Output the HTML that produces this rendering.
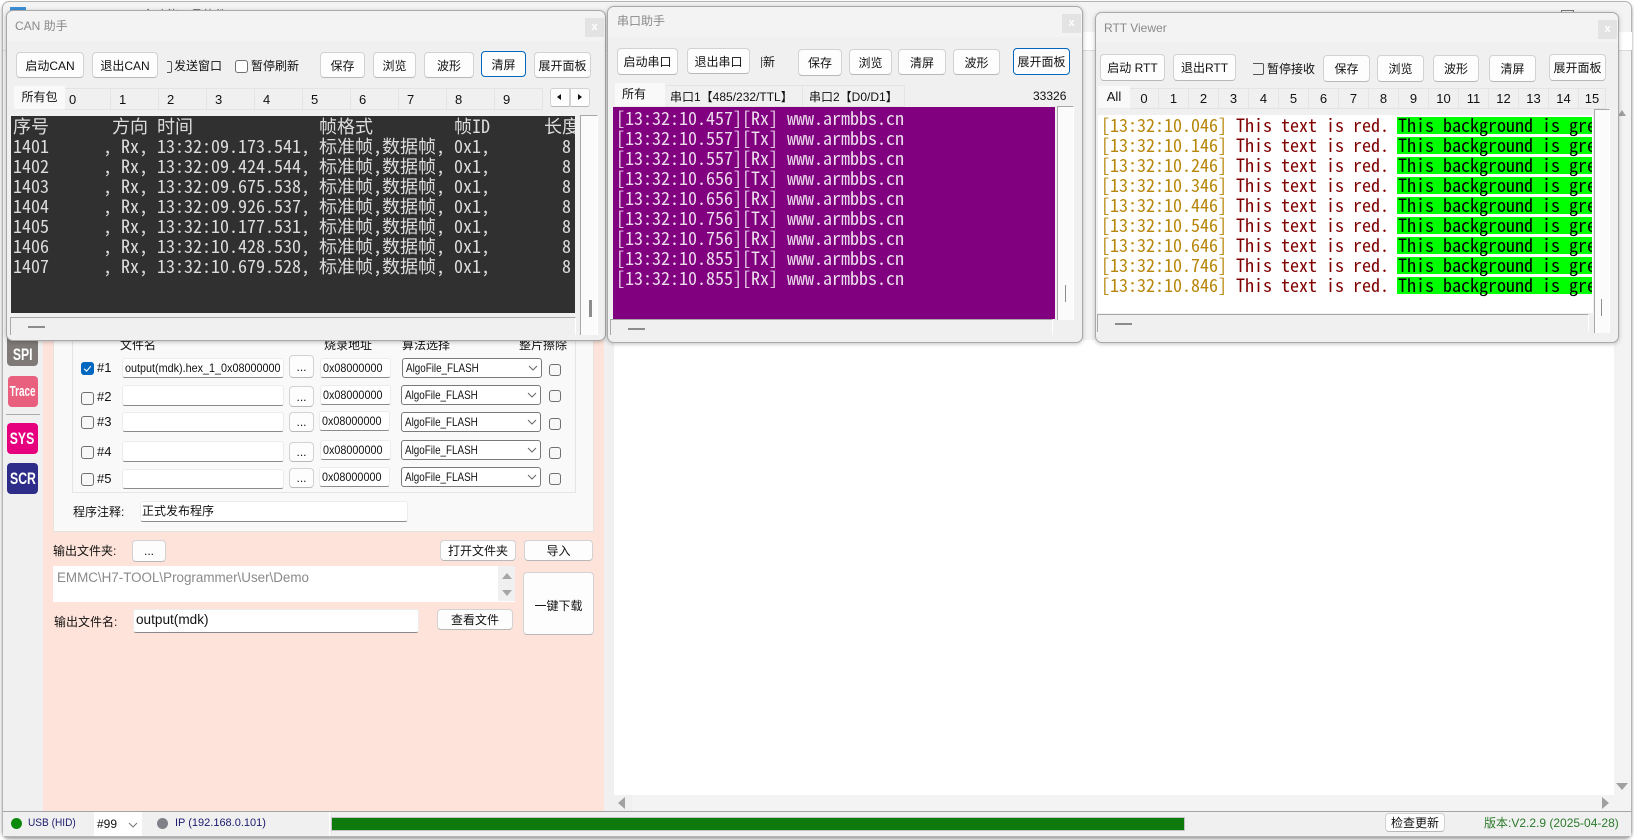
<!DOCTYPE html>
<html lang="zh"><head><meta charset="utf-8"><title>H7-TOOL</title>
<style>
html,body{margin:0;padding:0;width:1634px;height:840px;overflow:hidden;background:#fff}
*{box-sizing:border-box}
body{font:12px "Liberation Sans","Noto Sans CJK SC",sans-serif;color:#111;position:relative}
div,span.a,svg.a{position:absolute}
.b{background:#fdfdfd;border:1px solid #d2d2d2;border-bottom-color:#b8b8b8;border-radius:4px;display:flex;align-items:center;justify-content:center;white-space:nowrap;font-size:12px}
.f{border:1.5px solid #0067c0;border-radius:4px}
.win{background:#f0f0f0;border:1px solid #a9a9a9;border-radius:7px;box-shadow:0 1px 4px rgba(0,0,0,.25);overflow:hidden}
.tb{background:#f3f3f3}
.ttl{color:#8a8a8a;font-size:12px;white-space:nowrap}
.cl{background:#e3e3e3;color:#fff;font-size:11px;font-weight:bold;text-align:center;line-height:18px}
.t{white-space:nowrap}
.tab{background:#f0f0f0;border:1px solid #e4e4e4;border-left:none;white-space:nowrap;line-height:22px;text-align:center;font-size:13px}
.sel{background:#f9f9f9;border:none;border-bottom:1px solid #ececec;font-size:12px}
.tz{font-size:12px}
.mono{font-family:"Noto Sans Mono CJK SC","Liberation Mono","Noto Sans CJK SC",monospace;font-size:18px;line-height:20px;white-space:pre;overflow:hidden}
.sc{background:#fbfbfb;border:1px solid #a8a8a8;border-right-color:#fff;border-bottom:none}
.hs{background:#f0f0f0;border-top:1px solid #a8a8a8;border-left:1px solid #a8a8a8;border-right:1px solid #fff}
.mk{background:#8c8c8c}
.in{background:#fff;border:1px solid #ececec;border-bottom:1px solid #8a8a8a;border-radius:3px;padding-left:2px;line-height:18px;white-space:nowrap;overflow:hidden}
.sl{background:#fff;border:1px solid #7a7a7a;border-radius:3px;padding-left:3px;line-height:18px;white-space:nowrap}
.cb{background:#f7f7f7;border:1px solid #707070;border-radius:3px}
.side{border-radius:4px;color:#fff;font-weight:bold;font-size:17px;display:flex;align-items:center;justify-content:center;overflow:hidden}
.side span{display:inline-block;transform:scaleX(.72)}
.tri{width:0;height:0}
.q1,.q2,.q3{display:inline-block;transform-origin:0 50%}
.q1{transform:scaleX(.9)}
.q2{transform:scaleX(.9)}
.q3{transform:scaleX(.82)}
</style></head><body>

<!-- main window -->
<div style="left:2px;top:1px;width:1630px;height:836px;background:#f3f3f3;border:1px solid #b5b5b5;border-radius:7px;box-shadow:0 2px 3px rgba(0,0,0,.4)"></div>
<div style="left:10px;top:7px;width:16px;height:4px;background:#3d8fd8"></div>
<div class="t" style="left:88px;top:2px;color:#555;font-size:12px;height:10px;overflow:hidden;line-height:26px">H7-TOOL 多功能工具软件</div>
<div style="left:1561px;top:10px;width:13px;height:3px;border:1px solid #777;border-bottom:none"></div>
<div style="left:614px;top:32px;width:1018px;height:18px;background:#fff"></div>
<div style="left:3px;top:50px;width:1628px;height:1px;background:#dcdcdc"></div>
<!-- left -->
<div style="left:3px;top:340px;width:40px;height:471px;background:#f0f0f0"></div>
<div style="left:43px;top:340px;width:561px;height:471px;background:#fee3da"></div>
<div style="left:604px;top:340px;width:28px;height:471px;background:#f0f0f0"></div>
<div style="left:614px;top:340px;width:1000px;height:455px;background:#fff"></div>
<div class="tri" style="left:1618px;top:110px;border:4.5px solid transparent;border-top:none;border-bottom:6px solid #a0a0a0;border-left-width:4px;border-right-width:4px"></div>
<div class="tri" style="left:1616px;top:783px;border:6px solid transparent;border-bottom:none;border-top:7px solid #a0a0a0"></div>
<div class="tri" style="left:1602px;top:797px;border:6px solid transparent;border-right:none;border-left:7px solid #a0a0a0"></div>
<div class="tri" style="left:618px;top:797px;border:6px solid transparent;border-left:none;border-right:7px solid #a0a0a0"></div>

<div class="side" style="left:7px;top:330px;width:31px;height:36px;background:#7f7a78;padding-top:13px"><span>SPI</span></div>
<div class="side" style="left:8px;top:376px;width:30px;height:31px;background:#e8607e;font-size:15px"><span style="transform:scaleX(.66)">Trace</span></div>
<div style="left:6px;top:414px;width:34px;height:1px;background:#aaa"></div>
<div class="side" style="left:7px;top:423px;width:31px;height:31px;background:#e6007e"><span>SYS</span></div>
<div class="side" style="left:7px;top:463px;width:31px;height:31px;background:#2e2e8a"><span>SCR</span></div>

<div style="left:53px;top:340px;width:541px;height:192px;background:#f9f9f9;border:1px solid #e8e2df"></div>
<div style="left:72px;top:340px;width:504px;height:153px;background:#f9f9f9;border:1px solid #e5e5e5"></div>
<div class="t" style="left:120px;top:338px;line-height:14px">文件名</div>
<div class="t" style="left:324px;top:338px;line-height:14px">烧录地址</div>
<div class="t" style="left:402px;top:338px;line-height:14px">算法选择</div>
<div class="t" style="left:519px;top:338px;line-height:14px">整片擦除</div>

<!-- row 1 -->
<div style="left:81px;top:362px;width:13px;height:13px;background:#0067c0;border-radius:3px"></div>
<svg class="a" style="left:81px;top:362px" width="13" height="13"><path d="M3.2 6.8 5.6 9.2 9.8 4.2" stroke="#fff" fill="none" stroke-width="1.1"/></svg>
<div class="t" style="left:97px;top:361px;line-height:14px;font-size:13px">#1</div>
<div class="in" style="left:122px;top:358px;width:162px;height:20px"><span class="q1">output(mdk).hex_1_0x08000000</span></div>
<div class="b" style="left:289px;top:355px;width:25px;height:23px">...</div>
<div class="in" style="left:320px;top:358px;width:71px;height:20px"><span class="q2">0x08000000</span></div>
<div class="sl" style="left:402px;top:358px;width:140px;height:20px"><span class="q3">AlgoFile_FLASH</span></div>
<svg class="a" style="left:528px;top:365px" width="10" height="6"><path d="M1 1 5 5 9 1" stroke="#666" fill="none"/></svg>
<div class="cb" style="left:549px;top:364px;width:12px;height:12px"></div>
<!-- row 2 -->
<div class="cb" style="left:81px;top:392px;width:13px;height:13px"></div>
<div class="t" style="left:97px;top:390px;line-height:14px;font-size:13px">#2</div>
<div class="in" style="left:122px;top:385px;width:162px;height:21px"></div>
<div class="b" style="left:289px;top:386px;width:25px;height:21px">...</div>
<div class="in" style="left:320px;top:385px;width:71px;height:20px"><span class="q2">0x08000000</span></div>
<div class="sl" style="left:401px;top:385px;width:140px;height:20px"><span class="q3">AlgoFile_FLASH</span></div>
<svg class="a" style="left:527px;top:392px" width="10" height="6"><path d="M1 1 5 5 9 1" stroke="#666" fill="none"/></svg>
<div class="cb" style="left:549px;top:390px;width:12px;height:12px"></div>
<!-- row 3 -->
<div class="cb" style="left:81px;top:416px;width:13px;height:13px"></div>
<div class="t" style="left:97px;top:415px;line-height:14px;font-size:13px">#3</div>
<div class="in" style="left:122px;top:412px;width:162px;height:20px"></div>
<div class="b" style="left:289px;top:412px;width:25px;height:20px">...</div>
<div class="in" style="left:319px;top:411px;width:71px;height:20px"><span class="q2">0x08000000</span></div>
<div class="sl" style="left:401px;top:412px;width:140px;height:20px"><span class="q3">AlgoFile_FLASH</span></div>
<svg class="a" style="left:527px;top:419px" width="10" height="6"><path d="M1 1 5 5 9 1" stroke="#666" fill="none"/></svg>
<div class="cb" style="left:549px;top:418px;width:12px;height:12px"></div>
<!-- row 4 -->
<div class="cb" style="left:81px;top:446px;width:13px;height:13px"></div>
<div class="t" style="left:97px;top:445px;line-height:14px;font-size:13px">#4</div>
<div class="in" style="left:122px;top:441px;width:162px;height:21px"></div>
<div class="b" style="left:289px;top:442px;width:25px;height:20px">...</div>
<div class="in" style="left:320px;top:440px;width:71px;height:20px"><span class="q2">0x08000000</span></div>
<div class="sl" style="left:401px;top:440px;width:140px;height:20px"><span class="q3">AlgoFile_FLASH</span></div>
<svg class="a" style="left:527px;top:447px" width="10" height="6"><path d="M1 1 5 5 9 1" stroke="#666" fill="none"/></svg>
<div class="cb" style="left:549px;top:447px;width:12px;height:12px"></div>
<!-- row 5 -->
<div class="cb" style="left:81px;top:473px;width:13px;height:13px"></div>
<div class="t" style="left:97px;top:472px;line-height:14px;font-size:13px">#5</div>
<div class="in" style="left:122px;top:469px;width:162px;height:20px"></div>
<div class="b" style="left:289px;top:468px;width:25px;height:20px">...</div>
<div class="in" style="left:319px;top:467px;width:71px;height:20px"><span class="q2">0x08000000</span></div>
<div class="sl" style="left:401px;top:467px;width:140px;height:20px"><span class="q3">AlgoFile_FLASH</span></div>
<svg class="a" style="left:527px;top:474px" width="10" height="6"><path d="M1 1 5 5 9 1" stroke="#666" fill="none"/></svg>
<div class="cb" style="left:549px;top:473px;width:12px;height:12px"></div>

<div class="t" style="left:73px;top:505px;line-height:14px">程序注释:</div>
<div class="in" style="left:140px;top:501px;width:268px;height:21px;padding-left:1px">正式发布程序</div>

<div class="t" style="left:53px;top:544px;line-height:14px">输出文件夹:</div>
<div class="b" style="left:132px;top:540px;width:34px;height:22px">...</div>
<div class="b" style="left:440px;top:540px;width:76px;height:21px">打开文件夹</div>
<div class="b" style="left:524px;top:540px;width:69px;height:21px">导入</div>
<div style="left:53px;top:566px;width:462px;height:36px;background:#fff"></div>
<div class="t" style="left:57px;top:570px;line-height:16px;color:#8a8a8a;font-size:13.4px">EMMC\H7-TOOL\Programmer\User\Demo</div>
<div style="left:498px;top:566px;width:17px;height:35px;background:#f0f0f0"></div>
<div class="tri" style="left:502px;top:573px;border:5px solid transparent;border-top:none;border-bottom:6px solid #a6a6a6"></div>
<div class="tri" style="left:502px;top:590px;border:5px solid transparent;border-bottom:none;border-top:6px solid #a6a6a6"></div>
<div class="b" style="left:523px;top:572px;width:71px;height:63px;padding-top:4px">一键下载</div>
<div class="t" style="left:54px;top:615px;line-height:14px">输出文件名:</div>
<div class="in" style="left:133px;top:609px;width:286px;height:24px;padding-left:2px;line-height:20px;font-size:13.6px">output(mdk)</div>
<div class="b" style="left:437px;top:609px;width:76px;height:21px">查看文件</div>

<!-- status bar -->
<div style="left:3px;top:811px;width:1628px;height:25px;background:#f0f0f0;border-top:1px solid #a5a5a5"></div>
<div style="left:11px;top:818px;width:11px;height:11px;border-radius:50%;background:#0a8a0a"></div>
<div class="t" style="left:28px;top:816px;line-height:14px;color:#1a1a6e;font-size:11px"><span style="display:inline-block;transform:scaleX(.92);transform-origin:0 50%">USB (HID)</span></div>
<div style="left:94px;top:812px;width:48px;height:24px;background:#fff"></div>
<div class="t" style="left:97px;top:816px;line-height:16px;font-size:12px">#99</div>
<svg class="a" style="left:128px;top:822px" width="10" height="6"><path d="M1 1 5 5 9 1" stroke="#777" fill="none"/></svg>
<div style="left:157px;top:818px;width:11px;height:11px;border-radius:50%;background:#808088"></div>
<div class="t" style="left:175px;top:816px;line-height:14px;color:#1a1a6e;font-size:11px">IP (192.168.0.101)</div>
<div style="left:329px;top:812px;width:1px;height:24px;background:#fff"></div>
<div style="left:331px;top:817px;width:854px;height:14px;background:#0e7a0e;border:1px solid #c4c4c4"></div>
<div class="b" style="left:1385px;top:813px;width:60px;height:19px;border-radius:4px">检查更新</div>
<div class="t" style="left:1484px;top:816px;line-height:14px;color:#2a7a2a">版本:V2.2.9 (2025-04-28)</div>

<!-- CAN window -->
<div class="win" style="left:6px;top:10px;width:600px;height:331px"></div>
<div class="tb" style="left:7px;top:11px;width:598px;height:30px;border-radius:6px 6px 0 0"></div>
<div class="ttl" style="left:15px;top:18px;line-height:16px">CAN 助手</div>
<div class="cl" style="left:585px;top:18px;width:19px;height:19px">x</div>
<div class="b" style="left:16px;top:52px;width:68px;height:26px">启动CAN</div>
<div class="b" style="left:92px;top:52px;width:66px;height:26px">退出CAN</div>
<div style="left:167px;top:61px;width:5px;height:12px;border:1px solid #555;border-left:none;border-radius:0 2px 2px 0"></div>
<div class="t" style="left:174px;top:59px;line-height:14px">发送窗口</div>
<div class="cb" style="left:235px;top:60px;width:13px;height:13px;background:#fff"></div>
<div class="t" style="left:251px;top:59px;line-height:14px">暂停刷新</div>
<div class="b" style="left:320px;top:52px;width:45px;height:26px">保存</div>
<div class="b" style="left:373px;top:52px;width:43px;height:26px">浏览</div>
<div class="b" style="left:424px;top:52px;width:50px;height:26px">波形</div>
<div class="b f" style="left:481px;top:51px;width:45px;height:26px;border-color:#0067c0">清屏</div>
<div class="b" style="left:534px;top:52px;width:57px;height:26px">展开面板</div>
<div class="tab sel" style="left:14px;top:86px;width:51px;height:24px">所有包</div>
<div class="tab" style="left:65px;top:88px;width:46px;height:22px;text-align:left;padding-left:4px">0</div>
<div class="tab" style="left:111px;top:88px;width:48px;height:22px;text-align:left;padding-left:8px">1</div>
<div class="tab" style="left:159px;top:88px;width:48px;height:22px;text-align:left;padding-left:8px">2</div>
<div class="tab" style="left:207px;top:88px;width:48px;height:22px;text-align:left;padding-left:8px">3</div>
<div class="tab" style="left:255px;top:88px;width:48px;height:22px;text-align:left;padding-left:8px">4</div>
<div class="tab" style="left:303px;top:88px;width:48px;height:22px;text-align:left;padding-left:8px">5</div>
<div class="tab" style="left:351px;top:88px;width:48px;height:22px;text-align:left;padding-left:8px">6</div>
<div class="tab" style="left:399px;top:88px;width:48px;height:22px;text-align:left;padding-left:8px">7</div>
<div class="tab" style="left:447px;top:88px;width:48px;height:22px;text-align:left;padding-left:8px">8</div>
<div class="tab" style="left:495px;top:88px;width:48px;height:22px;text-align:left;padding-left:8px">9</div>
<div class="b" style="left:550px;top:88px;width:20px;height:19px;border-radius:3px 0 0 3px"></div>
<div class="b" style="left:570px;top:88px;width:20px;height:19px;border-radius:0 3px 3px 0"></div>
<div class="tri" style="left:557px;top:94px;border:3.5px solid transparent;border-left:none;border-right:4px solid #111"></div>
<div class="tri" style="left:578px;top:94px;border:3.5px solid transparent;border-right:none;border-left:4px solid #111"></div>
<div class="sc" style="left:580px;top:115px;width:18px;height:220px"></div>
<div class="mk" style="left:589px;top:300px;width:3px;height:17px"></div>
<div class="mono" style="left:11px;top:116px;width:564px;height:197px;background:#303030;color:#dcdcdc;padding:0 0 0 2px">序号       方向 时间              帧格式         帧ID      长度
1401      , Rx, 13:32:09.173.541, 标准帧,数据帧, 0x1,        8
1402      , Rx, 13:32:09.424.544, 标准帧,数据帧, 0x1,        8
1403      , Rx, 13:32:09.675.538, 标准帧,数据帧, 0x1,        8
1404      , Rx, 13:32:09.926.537, 标准帧,数据帧, 0x1,        8
1405      , Rx, 13:32:10.177.531, 标准帧,数据帧, 0x1,        8
1406      , Rx, 13:32:10.428.530, 标准帧,数据帧, 0x1,        8
1407      , Rx, 13:32:10.679.528, 标准帧,数据帧, 0x1,        8</div>
<div class="hs" style="left:10px;top:317px;width:566px;height:18px"></div>
<div class="mk" style="left:28px;top:326px;width:17px;height:2px"></div>

<!-- Serial window -->
<div class="win" style="left:607px;top:6px;width:476px;height:337px"></div>
<div class="tb" style="left:608px;top:7px;width:474px;height:30px;border-radius:6px 6px 0 0"></div>
<div class="ttl" style="left:617px;top:13px;line-height:16px">串口助手</div>
<div class="cl" style="left:1062px;top:14px;width:19px;height:19px">x</div>
<div class="b" style="left:617px;top:48px;width:61px;height:27px">启动串口</div>
<div class="b" style="left:687px;top:48px;width:63px;height:26px">退出串口</div>
<div style="left:761px;top:57px;width:1px;height:11px;background:#555"></div>
<div class="t" style="left:762px;top:55px;line-height:14px;width:13px;overflow:hidden;direction:rtl">断新</div>
<div class="b" style="left:798px;top:49px;width:44px;height:27px">保存</div>
<div class="b" style="left:849px;top:49px;width:43px;height:26px">浏览</div>
<div class="b" style="left:898px;top:49px;width:48px;height:26px">清屏</div>
<div class="b" style="left:953px;top:49px;width:47px;height:26px">波形</div>
<div class="b f" style="left:1013px;top:48px;width:57px;height:27px;border-color:#0067c0">展开面板</div>
<div class="tab sel" style="left:615px;top:83px;width:50px;height:24px;text-align:left;padding-left:7px">所有</div>
<div class="tab tz" style="left:665px;top:85px;width:138px;height:22px;text-align:left;padding-left:5px">串口1【485/232/TTL】</div>
<div class="tab tz" style="left:803px;top:85px;width:102px;height:22px;text-align:left;padding-left:6px">串口2【D0/D1】</div>
<div class="t" style="left:1033px;top:89px;line-height:14px">33326</div>
<div class="sc" style="left:1057px;top:106px;width:17px;height:214px"></div>
<div class="mk" style="left:1065px;top:285px;width:1px;height:17px"></div>
<div class="mono" style="left:613px;top:107px;width:442px;height:212px;background:#800080;color:#ecdcec;padding:1px 0 0 3px">[13:32:10.457][Rx] www.armbbs.cn
[13:32:10.557][Tx] www.armbbs.cn
[13:32:10.557][Rx] www.armbbs.cn
[13:32:10.656][Tx] www.armbbs.cn
[13:32:10.656][Rx] www.armbbs.cn
[13:32:10.756][Tx] www.armbbs.cn
[13:32:10.756][Rx] www.armbbs.cn
[13:32:10.855][Tx] www.armbbs.cn
[13:32:10.855][Rx] www.armbbs.cn</div>
<div class="hs" style="left:610px;top:319px;width:443px;height:16px"></div>
<div class="mk" style="left:628px;top:328px;width:17px;height:2px"></div>

<!-- RTT window -->
<div class="win" style="left:1095px;top:12px;width:524px;height:331px"></div>
<div class="tb" style="left:1096px;top:13px;width:522px;height:30px;border-radius:6px 6px 0 0"></div>
<div class="ttl" style="left:1104px;top:20px;line-height:16px">RTT Viewer</div>
<div class="cl" style="left:1598px;top:20px;width:19px;height:19px">x</div>
<div class="b" style="left:1100px;top:54px;width:65px;height:27px">启动 RTT</div>
<div class="b" style="left:1173px;top:54px;width:63px;height:27px">退出RTT</div>
<div style="left:1253px;top:63px;width:11px;height:12px;border:1px solid #555;border-left:none;border-radius:0 2px 2px 0"></div>
<div class="t" style="left:1267px;top:62px;line-height:14px">暂停接收</div>
<div class="b" style="left:1323px;top:55px;width:47px;height:27px">保存</div>
<div class="b" style="left:1377px;top:55px;width:47px;height:27px">浏览</div>
<div class="b" style="left:1433px;top:55px;width:46px;height:27px">波形</div>
<div class="b" style="left:1489px;top:55px;width:47px;height:27px">清屏</div>
<div class="b" style="left:1549px;top:54px;width:57px;height:27px">展开面板</div>
<div class="tab sel" style="left:1098px;top:86px;width:32px;height:23px;font-size:13px">All</div>
<div class="tab" style="left:1130px;top:88px;width:29px;height:21px;line-height:20px">0</div>
<div class="tab" style="left:1159px;top:88px;width:30px;height:21px;line-height:20px">1</div>
<div class="tab" style="left:1189px;top:88px;width:30px;height:21px;line-height:20px">2</div>
<div class="tab" style="left:1219px;top:88px;width:30px;height:21px;line-height:20px">3</div>
<div class="tab" style="left:1249px;top:88px;width:30px;height:21px;line-height:20px">4</div>
<div class="tab" style="left:1279px;top:88px;width:30px;height:21px;line-height:20px">5</div>
<div class="tab" style="left:1309px;top:88px;width:30px;height:21px;line-height:20px">6</div>
<div class="tab" style="left:1339px;top:88px;width:30px;height:21px;line-height:20px">7</div>
<div class="tab" style="left:1369px;top:88px;width:30px;height:21px;line-height:20px">8</div>
<div class="tab" style="left:1399px;top:88px;width:30px;height:21px;line-height:20px">9</div>
<div class="tab" style="left:1429px;top:88px;width:30px;height:21px;line-height:20px">10</div>
<div class="tab" style="left:1459px;top:88px;width:30px;height:21px;line-height:20px">11</div>
<div class="tab" style="left:1489px;top:88px;width:30px;height:21px;line-height:20px">12</div>
<div class="tab" style="left:1519px;top:88px;width:30px;height:21px;line-height:20px">13</div>
<div class="tab" style="left:1549px;top:88px;width:30px;height:21px;line-height:20px">14</div>
<div class="tab" style="left:1579px;top:88px;width:27px;height:21px;line-height:20px">15</div>
<div class="sc" style="left:1594px;top:109px;width:16px;height:224px"></div>
<div class="mk" style="left:1601px;top:299px;width:1px;height:17px"></div>
<div style="left:1098px;top:115px;width:495px;height:198px;background:#fff"></div>
<div style="left:1397px;top:117px;width:195px;height:17px;background:#0f0"></div>
<div style="left:1397px;top:137px;width:195px;height:17px;background:#0f0"></div>
<div style="left:1397px;top:157px;width:195px;height:17px;background:#0f0"></div>
<div style="left:1397px;top:177px;width:195px;height:17px;background:#0f0"></div>
<div style="left:1397px;top:197px;width:195px;height:17px;background:#0f0"></div>
<div style="left:1397px;top:217px;width:195px;height:17px;background:#0f0"></div>
<div style="left:1397px;top:237px;width:195px;height:17px;background:#0f0"></div>
<div style="left:1397px;top:257px;width:195px;height:17px;background:#0f0"></div>
<div style="left:1397px;top:277px;width:195px;height:17px;background:#0f0"></div>
<div class="mono" style="left:1098px;top:115px;width:494px;height:198px;padding:0 0 0 3px;color:#800000"><span style="color:#b8860b">[13:32:10.046]</span> This text is red. <span style="color:#000">This background is green</span>
<span style="color:#b8860b">[13:32:10.146]</span> This text is red. <span style="color:#000">This background is green</span>
<span style="color:#b8860b">[13:32:10.246]</span> This text is red. <span style="color:#000">This background is green</span>
<span style="color:#b8860b">[13:32:10.346]</span> This text is red. <span style="color:#000">This background is green</span>
<span style="color:#b8860b">[13:32:10.446]</span> This text is red. <span style="color:#000">This background is green</span>
<span style="color:#b8860b">[13:32:10.546]</span> This text is red. <span style="color:#000">This background is green</span>
<span style="color:#b8860b">[13:32:10.646]</span> This text is red. <span style="color:#000">This background is green</span>
<span style="color:#b8860b">[13:32:10.746]</span> This text is red. <span style="color:#000">This background is green</span>
<span style="color:#b8860b">[13:32:10.846]</span> This text is red. <span style="color:#000">This background is green</span></div>
<div class="hs" style="left:1097px;top:314px;width:492px;height:18px"></div>
<div class="mk" style="left:1115px;top:323px;width:17px;height:2px"></div>
</body></html>
